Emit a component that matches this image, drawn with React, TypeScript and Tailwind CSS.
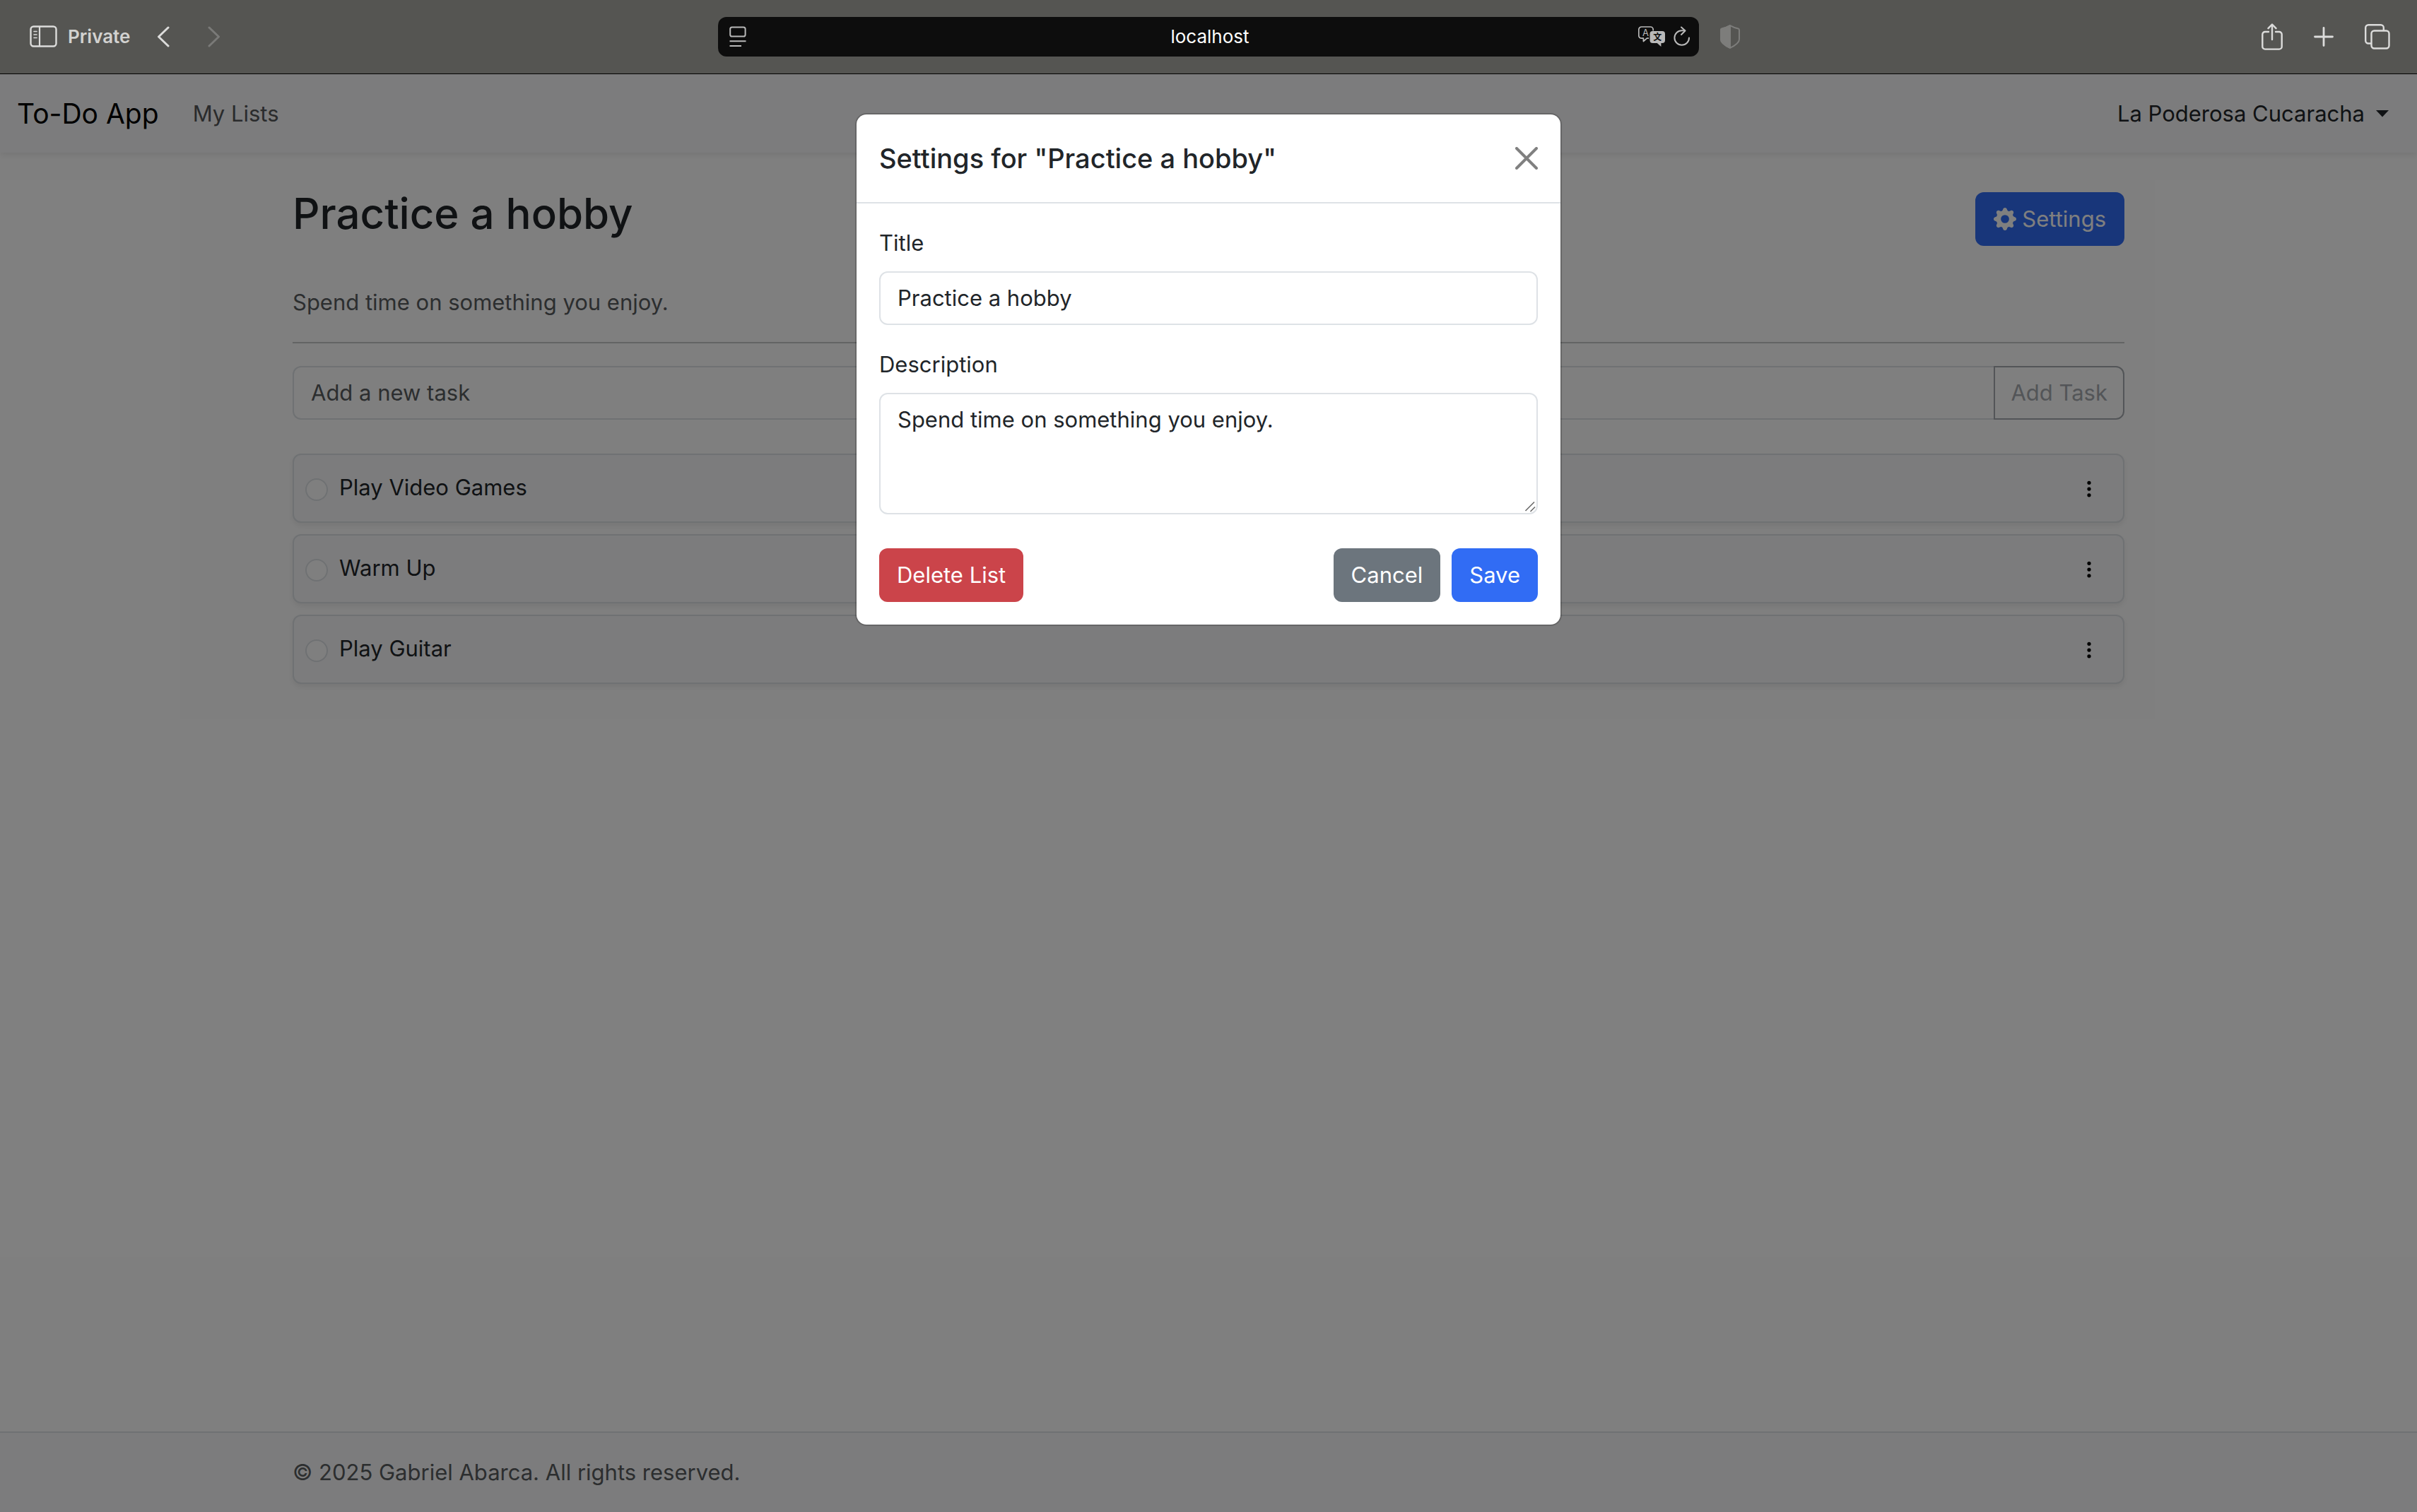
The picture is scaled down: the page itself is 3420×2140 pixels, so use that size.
import { useState } from "react";
import type { ReactNode } from "react";
import { BsGearFill, BsThreeDotsVertical } from "react-icons/bs";

const TASKS = ["Play Video Games", "Warm Up", "Play Guitar"];

function ToolButton({ label, className = "", children }: { label: string; className?: string; children: ReactNode }) {
  return (
    <button type="button" aria-label={label} className={`flex shrink-0 items-center justify-center ${className}`}>
      {children}
    </button>
  );
}

function SidebarIcon() {
  return (
    <svg width="40" height="32" viewBox="0 0 40 32" fill="none" stroke="currentColor" strokeLinecap="round">
      <rect x="1.5" y="1.5" width="36" height="28" rx="4" strokeWidth="2.4" />
      <path d="M14 2v27" strokeWidth="2.2" />
      <path d="M6 8.5h4M6 13h4M6 17.5h4" strokeWidth="1.6" />
    </svg>
  );
}

function ReaderIcon() {
  return (
    <svg width="24" height="30" viewBox="0 0 24 30" fill="none" stroke="currentColor" strokeWidth="2">
      <rect x="1.2" y="1.5" width="21.4" height="13" rx="2.6" />
      <path d="M0.5 21.3h23M0.5 28h16.5" />
    </svg>
  );
}

function TranslateIcon() {
  return (
    <svg width="38" height="30" viewBox="0 0 38 30" fill="none" fontFamily='Inter, "Noto Sans CJK SC", sans-serif'>
      <path
        d="M15 17.2h-2.6l-5 4.3v-4.3h-2.6a4 4 0 0 1-4-4v-8.2a4 4 0 0 1 4-4h12.4a4 4 0 0 1 4 4v1.5"
        stroke="currentColor"
        strokeWidth="1.7"
        strokeLinejoin="round"
      />
      <path
        d="M20.500 7h13.500a4 4 0 0 1 4 4v9a4 4 0 0 1-4 4h-1.600v5l-5.600-5h-6.300a4 4 0 0 1-4-4v-9a4 4 0 0 1 4-4z"
        fill="currentColor"
      />
      <text x="10.5" y="14" textAnchor="middle" fontSize="13" fill="currentColor">A</text>
      <text x="27.2" y="19.8" textAnchor="middle" fontSize="12" fontWeight="700" fill="#0d0d0d">文</text>
    </svg>
  );
}

function ReloadIcon() {
  return (
    <svg width="24" height="30" viewBox="0 0 24 30" fill="none" stroke="currentColor" strokeWidth="2" strokeLinecap="round" strokeLinejoin="round">
      <path d="M22 16.5a10.300 10.300 0 1 1-10.300-10.300h4.500" />
      <path d="M11 1.5l5.500 5-5.500 5.500" />
    </svg>
  );
}

function ShieldIcon() {
  return (
    <svg width="28" height="34" viewBox="0 0 28 34" fill="none" stroke="currentColor" strokeWidth="2" strokeLinejoin="round">
      <path d="M14 1.2c3.500 2 7.500 3.500 11.500 4.200 1 .2 1.500.9 1.500 2v13.300c0 5.300-6.500 9-13 12.100-6.500-3.100-13-6.800-13-12.100v-13.300c0-1.100.5-1.800 1.500-2 4-.7 8-2.200 11.500-4.200z" />
      <path d="M14 1.2v31.600c-6.500-3.100-13-6.800-13-12.100v-13.300c0-1.100.5-1.800 1.500-2 4-.7 8-2.200 11.500-4.200z" fill="currentColor" />
    </svg>
  );
}

function ShareIcon() {
  return (
    <svg width="30" height="38" viewBox="0 0 30 38" fill="none" stroke="currentColor" strokeWidth="2.4" strokeLinecap="round" strokeLinejoin="round">
      <path d="M10 12H5a3.700 3.700 0 0 0-3.700 3.700v17.200a3.700 3.700 0 0 0 3.700 3.700h20a3.700 3.700 0 0 0 3.700-3.700V15.700a3.700 3.700 0 0 0-3.700-3.700h-5" />
      <path d="M15 23V2M9.500 7.200L15 1.500l5.500 5.700" />
    </svg>
  );
}

function TabsIcon() {
  return (
    <svg width="36" height="36" viewBox="0 0 36 36" fill="none" stroke="currentColor" strokeWidth="2.4">
      <rect x="9.5" y="9.5" width="25" height="25" rx="4" />
      <path d="M9.500 27.500H5.200a4 4 0 0 1-4-4V5.200a4 4 0 0 1 4-4h17.600a4 4 0 0 1 4 4v4.300" />
    </svg>
  );
}

function Chevron({ flip = false }: { flip?: boolean }) {
  return (
    <svg width="18" height="30" viewBox="0 0 18 30" fill="none" stroke="currentColor" strokeWidth="3" strokeLinecap="round" strokeLinejoin="round">
      <path d={flip ? "M2 2l13.500 13-13.500 13" : "M16 2l-13.500 13 13.500 13"} />
    </svg>
  );
}

function BrowserToolbar() {
  return (
    <header className="grid h-[105px] grid-cols-[1fr_1388px_1fr] items-center border-b border-black bg-[#555552] text-[#dcdcdb]">
      <div className="flex items-center pl-[42px]">
        <ToolButton label="Show sidebar"><SidebarIcon /></ToolButton>
        <span className="ml-[14px] text-[26px] leading-8 font-semibold text-[#d2d2d0]">Private</span>
        <ToolButton label="Back" className="ml-[38px]"><Chevron /></ToolButton>
        <ToolButton label="Forward" className="ml-[54px] text-[#7a7a78]"><Chevron flip /></ToolButton>
      </div>
      <div className="grid h-14 grid-cols-[1fr_auto_1fr] items-center rounded-xl bg-[#0d0d0d] pr-3 pl-4 text-[#b9b9b9]">
        <ToolButton label="Page menu" className="justify-self-start"><ReaderIcon /></ToolButton>
        <span className="text-[26px] leading-8 text-white">localhost</span>
        <div className="flex items-center justify-end gap-3">
          <ToolButton label="Translate"><TranslateIcon /></ToolButton>
          <ToolButton label="Reload"><ReloadIcon /></ToolButton>
        </div>
      </div>
      <div className="flex items-center pr-[38px] pl-[30px]">
        <ToolButton label="Privacy report" className="text-[#7d7d7b]"><ShieldIcon /></ToolButton>
        <ToolButton label="Share" className="ml-auto"><ShareIcon /></ToolButton>
        <ToolButton label="New tab" className="ml-11">
          <svg width="28" height="28" viewBox="0 0 28 28" stroke="currentColor" strokeWidth="2.8" strokeLinecap="round">
            <path d="M14 1.5v25M1.5 14h25" />
          </svg>
        </ToolButton>
        <ToolButton label="Tab overview" className="ml-11"><TabsIcon /></ToolButton>
      </div>
    </header>
  );
}

function TaskRow({ title, index }: { title: string; index: number }) {
  const id = `task-${index}`;
  return (
    <li className="flex items-center gap-4 rounded-xl border-2 border-[#dee2e6] bg-[#f8f9fa] pt-[22px] pr-[34px] pb-6 pl-4 shadow-[0_4px_8px_rgba(0,0,0,0.075)]">
      <input
        id={id}
        type="checkbox"
        className="mt-[6px] size-8 appearance-none rounded-full border-2 border-[#dee2e6] bg-white"
      />
      <label htmlFor={id} className="flex-1">{title}</label>
      <button type="button" aria-label={`Options for ${title}`} className="mt-1 text-black">
        <BsThreeDotsVertical className="size-7" />
      </button>
    </li>
  );
}

function SettingsModal() {
  const [title, setTitle] = useState("Practice a hobby");
  const [description, setDescription] = useState("Spend time on something you enjoy.");
  const field = "block w-full rounded-xl border-2 border-[#dee2e6] bg-white px-6 py-3 outline-none";
  const button = "rounded-xl px-[25px] py-[14px] text-white";
  return (
    <div className="absolute inset-0 bg-black/50 pt-[55px]">
      <div
        role="dialog"
        aria-modal="true"
        aria-labelledby="settings-title"
        className="mx-auto w-full max-w-[1000px] rounded-2xl border-2 border-black/[0.175] bg-white bg-clip-padding"
      >
        <div className="flex items-center justify-between border-b-2 border-[#dee2e6] p-8">
          <h5 id="settings-title" className="text-[38px] leading-[60px] font-medium">
            Settings for "Practice a hobby"
          </h5>
          <button type="button" aria-label="Close" className="text-[#808080]">
            <svg width="32" height="32" viewBox="0 0 32 32" stroke="currentColor" strokeWidth="4" strokeLinecap="round">
              <path d="M2 2l28 28M30 2L2 30" />
            </svg>
          </button>
        </div>
        <form className="p-8" onSubmit={(event) => event.preventDefault()}>
          <label htmlFor="list-title" className="mb-4 block">Title</label>
          <input
            id="list-title"
            type="text"
            value={title}
            onChange={(event) => setTitle(event.target.value)}
            className={`${field} mb-8`}
          />
          <label htmlFor="list-description" className="mb-4 block">Description</label>
          <div className="relative mb-12">
            <textarea
              id="list-description"
              rows={3}
              value={description}
              onChange={(event) => setDescription(event.target.value)}
              className={`${field} resize-none`}
            />
            <svg className="absolute right-[3px] bottom-[3px]" width="16" height="16" viewBox="0 0 16 16" stroke="#6b6b6b" strokeWidth="1.6">
              <path d="M1.5 14L14 1.5M8.5 15L15 8.500" />
            </svg>
          </div>
          <div className="flex gap-4">
            <button type="button" className={`${button} mr-auto bg-[#cb444a]`}>Delete List</button>
            <button type="button" className={`${button} bg-[#6c757d]`}>Cancel</button>
            <button type="submit" className={`${button} bg-[#316cf4]`}>Save</button>
          </div>
        </form>
      </div>
    </div>
  );
}

export default function App() {
  return (
    <div className="flex min-h-screen flex-col bg-white font-[Inter,'Noto_Sans',sans-serif] text-[31px] leading-[48px] text-[#212529]">
      <BrowserToolbar />
      <div className="relative flex flex-1 flex-col">
        <nav className="flex h-[111px] items-center bg-[#f8f9fa] px-6 shadow-[0_4px_8px_rgba(0,0,0,0.075)]">
          <a href="#home" className="mr-12 text-[39px] text-black">To-Do App</a>
          <a href="#lists" className="text-[#555659]">My Lists</a>
          <button type="button" className="ml-auto flex items-center gap-4 pr-4">
            La Poderosa Cucaracha
            <svg width="18" height="10" viewBox="0 0 18 10" fill="currentColor">
              <path d="M0 0h18l-9 9.500z" />
            </svg>
          </button>
        </nav>

        <main className="mx-auto w-full max-w-[2592px] flex-1 pt-12">
          <div className="mb-12 flex items-center justify-between">
            <h2 className="mb-4 text-[60px] leading-[76px] font-medium">Practice a hobby</h2>
            <button type="button" className="flex items-center gap-2 rounded-xl bg-[#316cf4] px-[26px] py-[14px] text-white">
              <BsGearFill className="size-8" />
              Settings
            </button>
          </div>
          <p className="mb-8 text-[#595c5f]">Spend time on something you enjoy.</p>
          <hr className="mb-8 border-t-2 border-[#c7c8c9]" />
          <form className="mb-12 flex" onSubmit={(event) => event.preventDefault()}>
            <input
              type="text"
              aria-label="Add a new task"
              placeholder="Add a new task"
              className="min-w-0 flex-1 rounded-l-xl border-2 border-r-0 border-[#dee2e6] bg-white px-6 py-3 placeholder:text-[#595c5f]"
            />
            <button type="submit" disabled className="rounded-r-xl border-2 border-[#a6abb0] px-[22px] py-3 text-[#a6abb0]">
              Add Task
            </button>
          </form>
          <ul className="flex flex-col gap-4">
            {TASKS.map((task, index) => (
              <TaskRow key={task} title={task} index={index} />
            ))}
          </ul>
        </main>

        <footer className="border-t-2 border-[#dee2e6] bg-[#f8f9fa] py-8">
          <p className="mx-auto max-w-[2592px] text-[#595c5f]">© 2025 Gabriel Abarca. All rights reserved.</p>
        </footer>
        <SettingsModal />
      </div>
    </div>
  );
}
